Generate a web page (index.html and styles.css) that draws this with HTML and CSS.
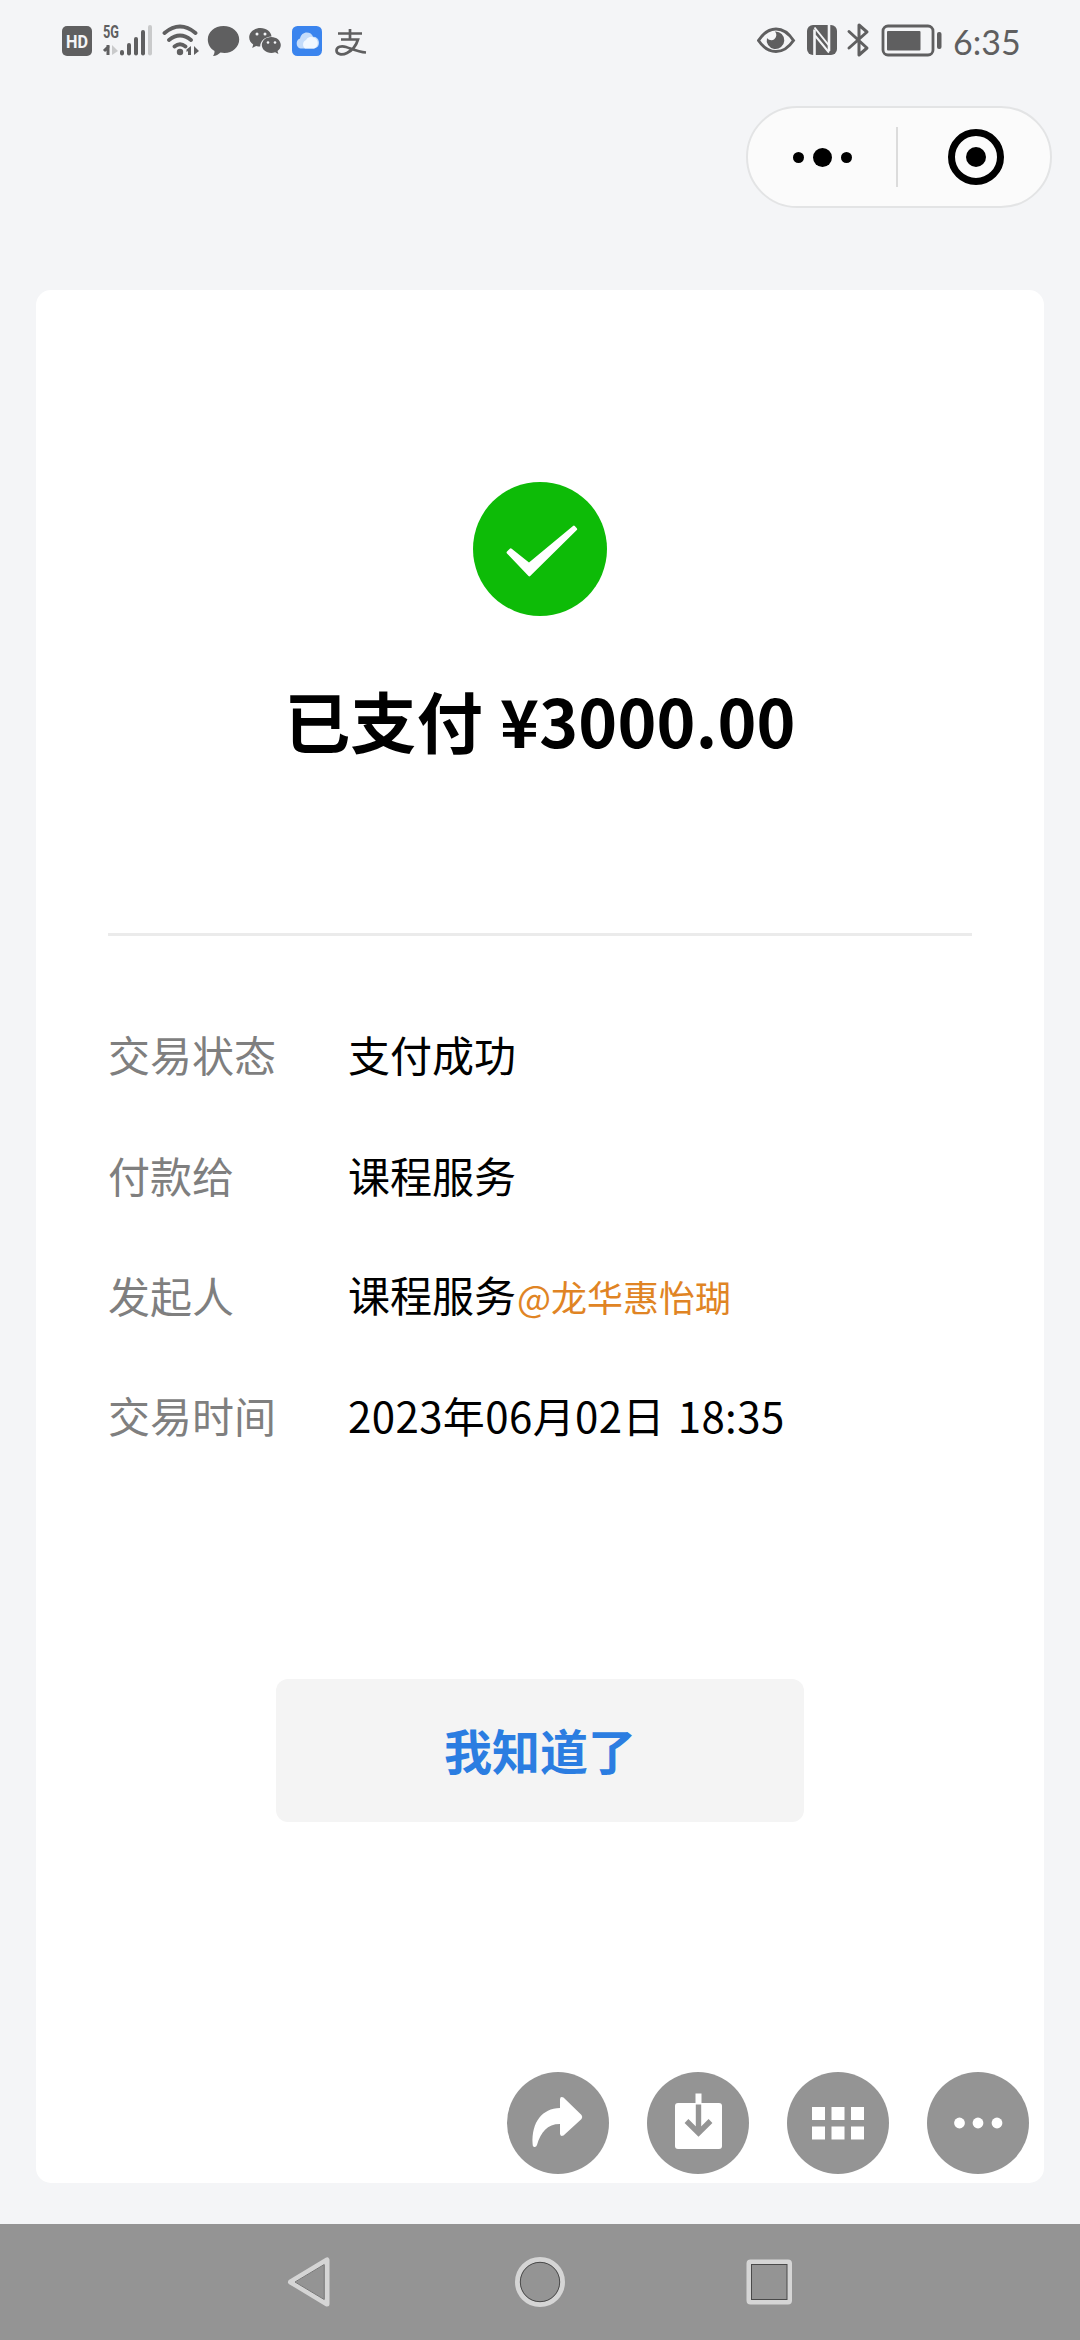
FILE: index.html
```html
<!DOCTYPE html>
<html lang="zh-CN">
<head>
<meta charset="utf-8">
<title>支付结果</title>
<link rel="stylesheet" href="styles.css">
</head>
<body>
<div class="screen">
  <header class="status-bar">
    <svg class="status-left" width="310" height="40" viewBox="60 20 310 40">
      <rect x="62" y="26" width="30" height="30" rx="5" fill="#5f5f60"/>
      <text class="hd" x="77" y="47.500" text-anchor="middle" textLength="22" lengthAdjust="spacingAndGlyphs">HD</text>
      <text class="net" x="103" y="38" textLength="16" lengthAdjust="spacingAndGlyphs">5G</text>
      <path d="M108 45v10M109 46l-5 5" stroke="#5f5f60" stroke-width="3" fill="none"/>
      <path d="M112 45v10l6-4z" fill="#c9cacb"/>
      <g fill="#5f5f60">
        <rect x="120" y="50" width="4" height="5.500" rx="2"/>
        <rect x="127" y="43" width="4" height="12.500" rx="2"/>
        <rect x="134" y="37" width="4" height="18.500" rx="2"/>
        <rect x="141" y="30" width="4" height="25.500" rx="2"/>
        <rect x="148" y="25" width="4" height="30.500" rx="2" fill="#c9cacb"/>
      </g>
      <g fill="none" stroke="#5f5f60" stroke-width="3.800" stroke-linecap="round">
        <path d="M164.500 33q15.500-13 31 0M169 40q11-9 22 0M174.500 46.500q5.500-4.500 11 0"/>
      </g>
      <circle cx="180" cy="52" r="3.200" fill="#5f5f60"/>
      <path d="M191 46v9h-3v-4l-1.500 1v-2.500zM194 46l5 5-5 4z" fill="#5f5f60"/>
      <path d="M223.500 26c9 0 15.700 6 15.700 13.500S232.500 53 224.500 53c-1.500 0-2.800-.2-4-.5-2 2-4.500 3.300-7.500 3.500 1.200-1.600 1.600-3.300 1.500-5-4-2.300-6.700-6.500-6.700-11.500C207.800 32 214.500 26 223.500 26z" fill="#5f5f60"/>
      <path d="M260.500 28c6 0 10.700 3.800 11 8.500-6.700.3-11.300 4.600-11.300 10-1.400 0-2.700-.1-4-.5l-4 2 1-3.500c-2.500-1.700-4-4-4-7 0-5.300 5-9.500 11.300-9.500z" fill="#5f5f60"/>
      <circle cx="257" cy="34" r="1.500" fill="#f4f5f7"/><circle cx="265" cy="34" r="1.500" fill="#f4f5f7"/>
      <path d="M271.300 37c5.300 0 9.500 3.600 9.500 8 0 2.500-1.300 4.500-3.300 6l.9 3-3.300-1.700c-1.200.4-2.500.6-3.800.6-5.300 0-9.500-3.500-9.500-7.900s4.200-8 9.500-8z" fill="#5f5f60"/>
      <circle cx="268" cy="42.500" r="1.300" fill="#f4f5f7"/><circle cx="275" cy="42.500" r="1.300" fill="#f4f5f7"/>
      <rect x="292" y="26" width="30" height="30" rx="5.500" fill="#3a84ee"/>
      <path d="M300.500 48.500a5.300 5.300 0 0 1-.5-10c.8-3.800 3.500-6 6.800-6 3 0 5.200 1.600 6.300 4.200a6 6 0 0 1 1.400 11.800z" fill="#c4dcfb"/>
      <path d="M305 48.500a5 5 0 0 1 1-8.500 5.500 5.500 0 0 1 7.500-2.500 5.800 5.800 0 0 1 .5 11z" fill="#f2f8ff"/>
      <path d="M338 33.500h24M350 29v10M341 39.500h17c-2 6.500-6 11-11 13.500-5 2.500-10.500 1.500-10.500-2.500 0-3.800 5-5 9.500-3.500 6 2 12 5 20 5.500" fill="none" stroke="#5f5f60" stroke-width="2.700"/>
    </svg>
    <div class="status-right">
      <svg width="186" height="40" viewBox="756 20 186 40">
        <path d="M757.500 40.500q7.500-11.500 17.500-11.500t17.500 11.500q-7.500 11-17.500 11t-17.500-11z" fill="none" stroke="#5f5f60" stroke-width="3"/>
        <path d="M774 31.500a8.800 8.800 0 1 1-8 6.500c2 2.500 5.500 3 7.500 1 2.300-2.200 2.500-5.300.5-7.500z" fill="#5f5f60"/>
        <rect x="806" y="25" width="30" height="30" rx="6" fill="#5f5f60"/>
        <path d="M813.500 55V29.500M828 51V25" fill="none" stroke="#f4f5f7" stroke-width="2.600"/>
        <path d="M813.500 27.500l14 17.500M814 35.500l14 17" fill="none" stroke="#f4f5f7" stroke-width="2"/>
        <path d="M848 31.500l18 16.500-8 7V25l8 7-18 16" fill="none" stroke="#5f5f60" stroke-width="3" stroke-linejoin="round" stroke-linecap="round"/>
        <rect x="882" y="26" width="50" height="29" rx="5" fill="none" stroke="#5f5f60" stroke-width="2.800"/>
        <rect x="886" y="31" width="33.500" height="19.500" rx="1" fill="#5f5f60"/>
        <rect x="936" y="32" width="4.500" height="17" rx="2" fill="#5f5f60"/>
      </svg>
      <span class="clock">6:35</span>
    </div>
  </header>

  <div class="title-bar">
    <div class="capsule">
      <div class="capsule-item capsule-more"><i class="dot"></i><i class="dot dot-big"></i><i class="dot"></i></div>
      <div class="capsule-divider"></div>
      <div class="capsule-item capsule-close"><i class="ring"><i class="ring-core"></i></i></div>
    </div>
  </div>

  <main class="card">
    <svg class="success" width="134" height="134" viewBox="473 482 134 134">
      <circle cx="540" cy="549" r="67" fill="#0dbb07"/>
      <path d="M507 551.500l2.800-2.800q.9-.8 1.900 0l17.300 13.800 44-36.500q1-.8 1.800 0l2 2.200q.8.900 0 1.900l-46.600 46q-.8.900-1.700 0l-21.500-22.700q-.9-.9 0-1.900z" fill="#fff"/>
    </svg>
    <h1 class="amount">已支付 ¥3000.00</h1>
    <dl class="details">
      <div class="row"><dt>交易状态</dt><dd>支付成功</dd></div>
      <div class="row"><dt>付款给</dt><dd>课程服务</dd></div>
      <div class="row"><dt>发起人</dt><dd>课程服务<span class="mention">@龙华惠怡瑚</span></dd></div>
      <div class="row"><dt>交易时间</dt><dd class="time">2023年06月02日 18:35</dd></div>
    </dl>
    <button class="confirm">我知道了</button>
  </main>

  <div class="float-actions">
    <svg viewBox="0 0 102 102"><circle cx="51" cy="51" r="51" fill="#949494"/>
      <path d="M53 27.500q0-3.500 3.500-2L74.500 43q1.500 2 0 4L56.500 63.500q-3.500 1.500-3.500-2V52C40 52 34 60 30 73q-.8 2.500-3 2-1.500-.3-1.400-3C24.500 50 35 36.500 53 36z" fill="#fff"/></svg>
    <svg viewBox="0 0 102 102"><circle cx="51" cy="51" r="51" fill="#949494"/>
      <rect x="28" y="31" width="47" height="46" rx="3" fill="#fff"/><rect x="48.500" y="21.500" width="6" height="11" fill="#fff"/>
      <path d="M51.500 32.500v28M39.500 49l12 12 12-12" stroke="#949494" stroke-width="5.400" fill="none"/></svg>
    <svg viewBox="0 0 102 102"><circle cx="51" cy="51" r="51" fill="#949494"/>
      <path d="M25 35h13v13H25zM44.500 35h13v13h-13zM64 35h13v13H64zM25 54.500h13v13H25zM44.500 54.500h13v13h-13zM64 54.500h13v13H64z" fill="#fff"/></svg>
    <svg viewBox="0 0 102 102"><circle cx="51" cy="51" r="51" fill="#949494"/>
      <g fill="#fff"><circle cx="32.500" cy="51" r="5.400"/><circle cx="51" cy="51" r="5.400"/><circle cx="70" cy="51" r="5.400"/></g></svg>
  </div>

  <nav class="nav-bar">
    <svg width="60" height="60" viewBox="0 0 60 60"><path d="M47 8v44L10.500 30z" fill="none" stroke="#d5d5d5" stroke-width="5" stroke-linejoin="round"/><path d="M44.200 12.500v35L15 30z" fill="none" stroke="#777" stroke-width="1"/></svg>
    <svg width="60" height="60" viewBox="0 0 60 60"><circle cx="30" cy="30" r="22.500" fill="none" stroke="#d5d5d5" stroke-width="5"/><circle cx="30" cy="30" r="19.700" fill="none" stroke="#4a4a4a" stroke-width="1"/></svg>
    <svg width="60" height="60" viewBox="0 0 60 60"><rect x="9" y="10" width="40.500" height="40" rx="1.500" fill="none" stroke="#d5d5d5" stroke-width="5"/><rect x="11.500" y="12.500" width="35.500" height="35" fill="none" stroke="#4a4a4a" stroke-width="1"/></svg>
  </nav>
</div>
</body>
</html>
```
FILE: styles.css
```css
* { box-sizing: border-box; margin: 0; padding: 0; }
body {
  background: #f4f5f7;
  color: #000;
  font-family: "Noto Sans CJK SC", sans-serif;
}
svg { display: block; }
.screen {
  position: relative;
  width: 1080px;
  height: 2340px;
  display: flex;
  flex-direction: column;
  overflow: hidden;
}
.status-bar {
  height: 80px;
  padding: 20px 58px 20px 60px;
  display: flex;
  justify-content: space-between;
}
.hd { font: bold 19px "Roboto", sans-serif; fill: #f4f5f7; }
.net { font: bold 17.500px "Roboto", sans-serif; fill: #5f5f60; }
.status-right { display: flex; align-items: center; gap: 10px; }
.clock {
  width: 69px;
  color: #5f5f60;
  font: 34px/36px "Lato", sans-serif;
  padding-top: 3px;
  white-space: nowrap;
}
.title-bar {
  height: 210px;
  padding: 26px 28px 0 0;
  display: flex;
  justify-content: flex-end;
}
.capsule {
  width: 306px;
  height: 102px;
  display: flex;
  align-items: center;
  background: #fbfbfb;
  border: 2px solid #e3e4e5;
  border-radius: 51px;
}
.capsule-item { flex: 1; display: flex; align-items: center; justify-content: center; }
.capsule-divider { width: 2px; height: 60px; background: #dcdcdc; }
.capsule-more { gap: 9px; }
.capsule-close { padding-left: 4px; }
.dot { width: 11px; height: 11px; border-radius: 50%; background: #000; }
.dot-big { width: 19px; height: 19px; }
.ring {
  width: 56px;
  height: 56px;
  display: flex;
  align-items: center;
  justify-content: center;
  border: 7.500px solid #000;
  border-radius: 50%;
}
.ring-core { width: 20px; height: 20px; border-radius: 50%; background: #000; }
.card {
  height: 1893px;
  margin: 0 36px;
  padding: 192px 72px 0;
  display: flex;
  flex-direction: column;
  align-items: center;
  background: #fff;
  border-radius: 15px;
}
.amount {
  height: 100px;
  margin-top: 53px;
  font-size: 66px;
  font-weight: 700;
  line-height: 100px;
  letter-spacing: .2px;
  word-spacing: 2px;
  white-space: nowrap;
}
.details {
  width: 100%;
  margin-top: 164px;
  padding-top: 58px;
  border-top: 3px solid #ebebeb;
}
.row {
  height: 120.400px;
  display: flex;
  align-items: center;
  font-size: 42px;
  line-height: 60px;
  white-space: nowrap;
}
.row dt { width: 240px; color: #7f7f7f; }
.time { letter-spacing: .4px; word-spacing: 3px; }
.mention { margin-left: 1px; color: #e08424; font-size: 36px; }
.confirm {
  width: 528px;
  height: 143px;
  margin-top: 203px;
  padding-bottom: 3px;
  border: 0;
  border-radius: 12px;
  background: #f4f4f4;
  color: #2b7de1;
  font: 700 48px/70px "Noto Sans CJK SC", sans-serif;
}
.float-actions {
  position: absolute;
  right: 51px;
  bottom: 166px;
  display: flex;
  gap: 38px;
}
.float-actions svg { width: 102px; height: 102px; }
.nav-bar {
  height: 116px;
  margin-top: auto;
  display: flex;
  align-items: center;
  justify-content: center;
  gap: 170px;
  background: #949494;
}
```
